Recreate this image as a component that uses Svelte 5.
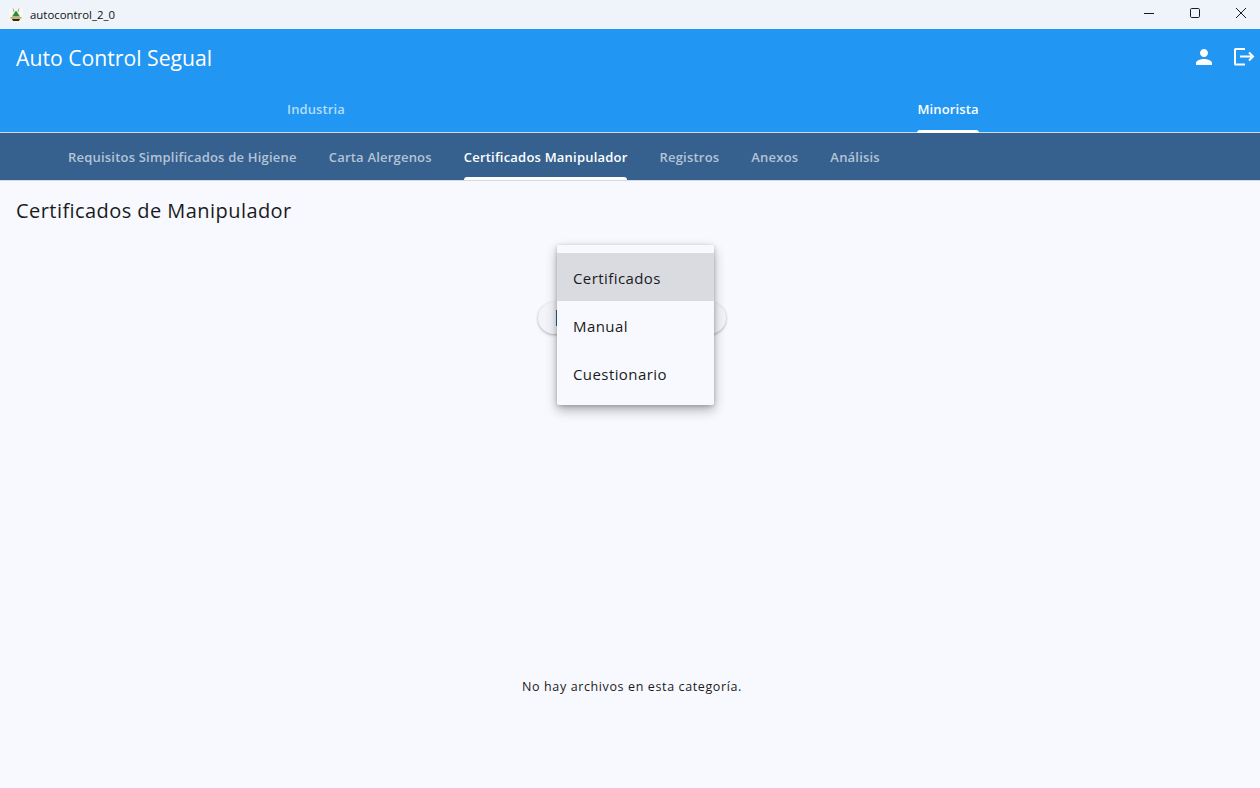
<script>
  const mainTabs = [
    { label: 'Industria', active: false },
    { label: 'Minorista', active: true }
  ];
  const subTabs = [
    { label: 'Requisitos Simplificados de Higiene', active: false },
    { label: 'Carta Alergenos', active: false },
    { label: 'Certificados Manipulador', active: true },
    { label: 'Registros', active: false },
    { label: 'Anexos', active: false },
    { label: 'Análisis', active: false }
  ];
  const menu = ['Certificados', 'Manual', 'Cuestionario'];
</script>

<div class="window">
  <div class="titlebar">
    <svg class="appicon" viewBox="0 0 16 16" width="16" height="16">
      <rect x="1" y="1" width="14" height="14" rx="2" fill="#f7f8f2"/>
      <path d="M5 1.5 L6 5 M11 1.5 L10 5" stroke="#a3a396" stroke-width="1" fill="none"/>
      <path d="M8 3.5 L4 9.5 H12 Z" fill="#2f8a35"/>
      <path d="M2 10 H14 L13 12 H3 Z" fill="#c9b27a"/>
      <path d="M4 12 H12 L11 14 H5 Z" fill="#33261a"/>
    </svg>
    <span class="wintitle">autocontrol_2_0</span>
    <div class="winbtns">
      <svg viewBox="0 0 46 29" width="46" height="29"><path d="M18 13.5 H28" stroke="#1a1a1a" stroke-width="1"/></svg>
      <svg viewBox="0 0 46 29" width="46" height="29"><rect x="18.5" y="8.5" width="9" height="9" rx="1.2" fill="none" stroke="#1a1a1a" stroke-width="1"/></svg>
      <svg viewBox="0 0 46 29" width="46" height="29"><path d="M18 8 L28 18 M28 8 L18 18" stroke="#1a1a1a" stroke-width="1"/></svg>
    </div>
  </div>

  <header class="appbar">
    <div class="apptitle">Auto Control Segual</div>
    <div class="actions">
      <svg viewBox="0 0 24 24" width="24" height="24"><path fill="#fff" d="M12 12c2.21 0 4-1.79 4-4s-1.79-4-4-4-4 1.79-4 4 1.79 4 4 4zm0 2c-2.67 0-8 1.34-8 4v2h16v-2c0-2.66-5.33-4-8-4z"/></svg>
      <svg viewBox="0 0 24 24" width="24" height="24" fill="none" stroke="#fff" stroke-width="2"><path d="M13 4 H3.5 A.5 .5 0 0 0 3 4.5 V19 A.5 .5 0 0 0 3.5 19.5 H13"/><path d="M8 11.5 H21 M17 7.5 L21 11.5 L17 15.5"/></svg>
    </div>
  </header>

  <nav class="maintabs">
    {#each mainTabs as t}
      <div class="maintab">
        <span class="tablabel" class:on={t.active}>{t.label}</span>
      </div>
    {/each}
  </nav>

  <nav class="subtabs">
    {#each subTabs as t}
      <span class="subtab" class:on={t.active}>{t.label}</span>
    {/each}
  </nav>

  <main class="content">
    <h1>Certificados de Manipulador</h1>
    <div class="center">
      <div class="pill"><span class="tick"></span></div>
      <div class="popup">
        {#each menu as m, i}
          <div class="item" class:sel={i === 0}>{m}</div>
        {/each}
      </div>
    </div>
    <p class="empty">No hay archivos en esta categoría.</p>
  </main>
</div>

<style>
  :global(body) {
    margin: 0;
    background: #f8f9ff;
  }
  .window {
    width: 1260px;
    height: 788px;
    display: flex;
    flex-direction: column;
    overflow: hidden;
    font-family: "Open Sans", "Noto Sans", sans-serif;
    color: #1a1b20;
    background: #f8f9ff;
  }
  .titlebar {
    height: 29px;
    flex: none;
    display: flex;
    align-items: center;
    background: #eff4fa;
    padding-left: 8px;
  }
  .appicon { flex: none; }
  .wintitle {
    margin-left: 6px;
    font-size: 11.4px;
    color: #111;
  }
  .winbtns {
    margin-left: auto;
    margin-right: -4px;
    display: flex;
  }
  .appbar {
    height: 60px;
    box-sizing: border-box;
    flex: none;
    display: flex;
    align-items: center;
    justify-content: space-between;
    background: #2196f3;
    padding: 0 4px 4px 16px;
  }
  .apptitle {
    color: #fff;
    font-size: 21.2px;
    line-height: 60px;
    margin-top: 2px;
  }
  .actions {
    display: flex;
    gap: 16px;
  }
  .maintabs {
    height: 43px;
    flex: none;
    display: flex;
    background: #2196f3;
    border-bottom: 1px solid #cfd8e3;
  }
  .maintab {
    flex: none;
    width: 632px;
    display: flex;
    justify-content: center;
  }
  .tablabel {
    position: relative;
    height: 43px;
    line-height: 41px;
    font-size: 13px;
    letter-spacing: 0.12px;
    font-weight: 600;
    color: #b5dcfb;
  }
  .tablabel.on {
    color: #fff;
  }
  .tablabel.on::after {
    content: "";
    position: absolute;
    left: 0;
    right: 0;
    bottom: -1px;
    height: 3px;
    background: #fff;
    border-radius: 3px 3px 0 0;
  }
  .subtabs {
    height: 47px;
    flex: none;
    display: flex;
    gap: 32px;
    padding-left: 68px;
    background: #36618e;
    border-bottom: 1px solid #d5d9e0;
  }
  .subtab {
    position: relative;
    height: 47px;
    line-height: 49px;
    font-size: 13px;
    letter-spacing: 0.206px;
    font-weight: 600;
    color: #b4c4d6;
  }
  .subtab.on {
    color: #fff;
  }
  .subtab.on::after {
    content: "";
    position: absolute;
    left: 0;
    right: 0;
    bottom: 0;
    height: 3px;
    background: #fff;
    border-radius: 3px 3px 0 0;
  }
  .content {
    position: relative;
    flex: 1;
  }
  h1 {
    margin: 0;
    padding: 16px 16px 0;
    font-size: 20px;
    letter-spacing: 0.44px;
    font-weight: 400;
    line-height: 28px;
    color: #1a1b20;
  }
  .center {
    position: relative;
    height: 0;
  }
  .pill {
    position: absolute;
    left: 538px;
    top: 77px;
    width: 188px;
    height: 32px;
    border-radius: 16px;
    background: #f3f3fa;
    box-shadow: 0 1px 3px rgba(0, 0, 0, 0.3);
  }
  .tick {
    position: absolute;
    left: 18px;
    top: 8px;
    width: 2px;
    height: 16px;
    background: #36618e;
  }
  .popup {
    position: absolute;
    left: 557px;
    top: 20px;
    width: 157px;
    padding: 8px 0;
    background: #f8f9ff;
    border-radius: 2px;
    box-shadow: 0 5px 12px rgba(0, 0, 0, 0.3), 0 1px 4px rgba(0, 0, 0, 0.2);
  }
  .item {
    height: 48px;
    line-height: 50px;
    padding-left: 16px;
    font-size: 15px;
    letter-spacing: 0.42px;
    color: #1a1b20;
  }
  .item.sel {
    background: #dadbe0;
  }
  .empty {
    position: absolute;
    left: 0;
    right: 0;
    top: 496px;
    margin: 0;
    padding-left: 4px;
    text-align: center;
    font-size: 12.5px;
    letter-spacing: 0.62px;
    line-height: 20px;
  }
</style>
